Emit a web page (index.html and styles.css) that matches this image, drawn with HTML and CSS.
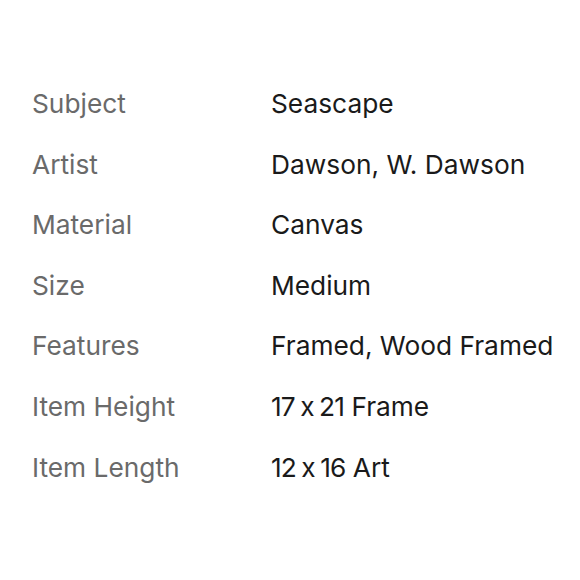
FILE: index.html
```html
<!DOCTYPE html>
<html>
<head>
<meta charset="utf-8">
<link rel="stylesheet" href="styles.css">
</head>
<body>
<dl class="specs">
  <div class="row"><dt>Subject</dt><dd>Seascape</dd></div>
  <div class="row"><dt>Artist</dt><dd>Dawson, W. Dawson</dd></div>
  <div class="row"><dt>Material</dt><dd>Canvas</dd></div>
  <div class="row"><dt>Size</dt><dd>Medium</dd></div>
  <div class="row"><dt>Features</dt><dd>Framed, Wood Framed</dd></div>
  <div class="row"><dt>Item Height</dt><dd><span class="dims">17 x 21</span> Frame</dd></div>
  <div class="row"><dt>Item Length</dt><dd><span class="dims">12 x 16</span> Art</dd></div>
</dl>
</body>
</html>
```
FILE: styles.css
```css
html, body {
  margin: 0;
  padding: 0;
  background: #fff;
}
body {
  font-family: Inter, "Noto Sans", sans-serif;
  font-size: 26.3px;
  font-feature-settings: "calt" 0;
  -webkit-font-smoothing: antialiased;
}
.specs {
  margin: 0;
  padding: 74px 0 0 32px;
}
.row {
  display: grid;
  grid-template-columns: 239px 1fr;
  height: 60.6px;
  line-height: 60.6px;
}
dt {
  color: #6a6a6a;
}
dd {
  margin: 0;
  color: #1a1a1a;
}
.dims {
  letter-spacing: -0.035em;
  word-spacing: -1px;
}
```
